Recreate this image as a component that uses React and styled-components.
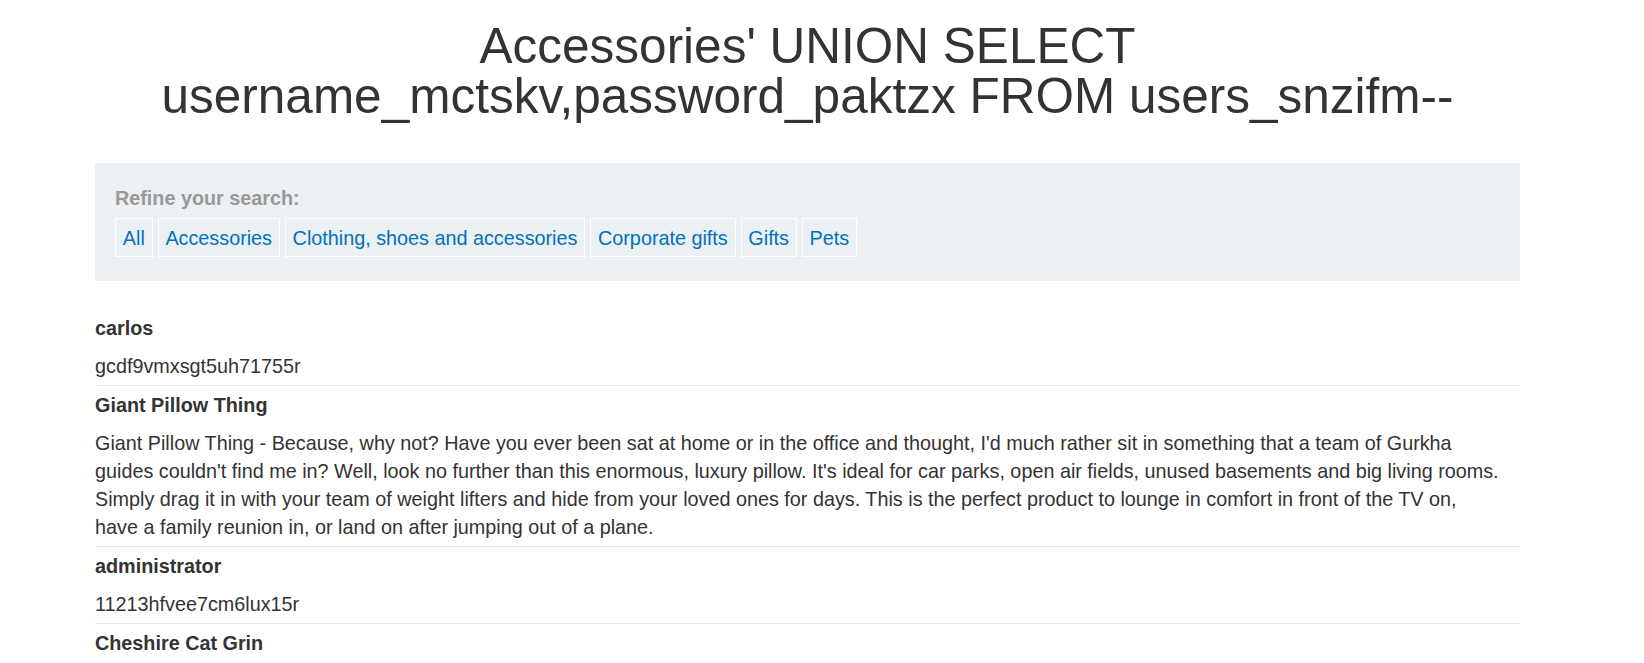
import React from 'react';
import styled, { createGlobalStyle } from 'styled-components';

const GlobalStyle = createGlobalStyle`
  html, body {
    margin: 0;
    padding: 0;
    background: #fff;
  }
  body {
    font-family: "Liberation Sans", Arial, sans-serif;
    font-size: 19.8px;
    line-height: 28px;
    color: #333332;
  }
`

const Page = styled.div`
  height: 100vh;
  overflow: hidden;
`

const Container = styled.div`
  width: 1425px;
  margin-left: 95px;
`

const Title = styled.h1`
  margin: 21px 0 42px;
  font-size: 49.5px;
  line-height: 50px;
  font-weight: 400;
  text-align: center;
  color: #333332;
`

const Filters = styled.section`
  background: #ebf0f2;
  padding: 21px 20px 24px;
`

const FilterLabel = styled.p`
  margin: 0 0 6px;
  font-weight: 700;
  color: #999;
`

const FilterList = styled.div`
  display: flex;
  flex-wrap: wrap;
  gap: 5px;
`

const FilterLink = styled.a`
  display: inline-block;
  padding: 4.5px 6.8px;
  border: 1px solid #fff;
  color: #0071bc;
  text-decoration: none;
  cursor: pointer;
`

const Results = styled.div`
  margin-top: 28px;
`

const Row = styled.div`
  border-top: ${({ $first }) => ($first ? 'none' : '1px solid #e6e6e6')};
`

const Name = styled.div`
  padding: 5px 0;
  font-weight: 700;
`

const Value = styled.div`
  padding: 5px 16px 5px 0;
`

const categories = [
  'All',
  'Accessories',
  'Clothing, shoes and accessories',
  'Corporate gifts',
  'Gifts',
  'Pets',
]

const rows = [
  { name: 'carlos', value: 'gcdf9vmxsgt5uh71755r' },
  {
    name: 'Giant Pillow Thing',
    value:
      "Giant Pillow Thing - Because, why not? Have you ever been sat at home or in the office and thought, I'd much rather sit in something that a team of Gurkha guides couldn't find me in? Well, look no further than this enormous, luxury pillow. It's ideal for car parks, open air fields, unused basements and big living rooms. Simply drag it in with your team of weight lifters and hide from your loved ones for days. This is the perfect product to lounge in comfort in front of the TV on, have a family reunion in, or land on after jumping out of a plane.",
  },
  { name: 'administrator', value: '11213hfvee7cm6lux15r' },
  {
    name: 'Cheshire Cat Grin',
    value:
      "We've all been there, found ourselves in a situation where we find it hard to look happy. Now you can put on a smile that will last all day long with our Cheshire Cat Grin.",
  },
  { name: 'wiener', value: 'p4ssw0rd8x2k9m1q' },
]

export default function App() {
  return (
    <Page>
      <GlobalStyle />
      <Container>
        <Title>
          Accessories' UNION SELECT
          <br />
          username_mctskv,password_paktzx FROM users_snzifm--
        </Title>

        <Filters>
          <FilterLabel>Refine your search:</FilterLabel>
          <FilterList>
            {categories.map((c) => (
              <FilterLink key={c}>{c}</FilterLink>
            ))}
          </FilterList>
        </Filters>

        <Results>
          {rows.map((r, i) => (
            <Row key={r.name} $first={i === 0}>
              <Name>{r.name}</Name>
              <Value>{r.value}</Value>
            </Row>
          ))}
        </Results>
      </Container>
    </Page>
  )
}
